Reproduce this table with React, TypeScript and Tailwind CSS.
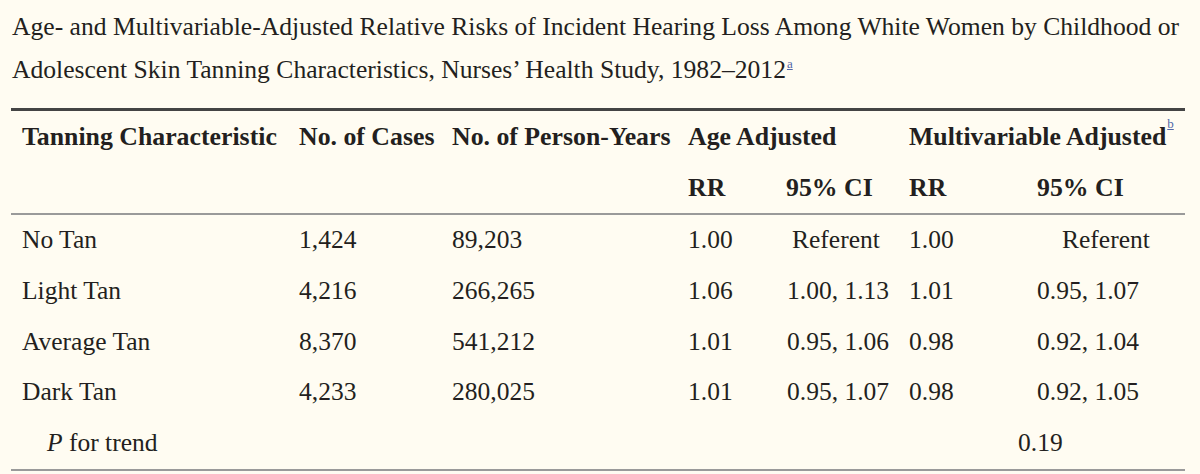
import React from 'react';

type Row = {
    name: string;
    cases: string;
    years: string;
    rr: string;
    ci: string;
    mvRr: string;
    mvCi: string;
    ref?: boolean;
};

const rows: Row[] = [
    { name: 'No Tan', cases: '1,424', years: '89,203', rr: '1.00', ci: 'Referent', mvRr: '1.00', mvCi: 'Referent', ref: true },
    { name: 'Light Tan', cases: '4,216', years: '266,265', rr: '1.06', ci: '1.00, 1.13', mvRr: '1.01', mvCi: '0.95, 1.07' },
    { name: 'Average Tan', cases: '8,370', years: '541,212', rr: '1.01', ci: '0.95, 1.06', mvRr: '0.98', mvCi: '0.92, 1.04' },
    { name: 'Dark Tan', cases: '4,233', years: '280,025', rr: '1.01', ci: '0.95, 1.07', mvRr: '0.98', mvCi: '0.92, 1.05' },
];

const grid = 'grid grid-cols-[277px_153px_236px_99px_122px_112px_1fr]';

export default function App() {
    return (
        <div
            className="w-[1200px] h-[474px] bg-[#fffcf2] text-[#231f20] overflow-hidden"
            style={{ fontFamily: '"Liberation Serif", "DejaVu Serif", serif' }}
        >
            {/* Caption */}
            <div className="pl-[12px] pt-[5px] text-[25.6px] leading-[43px] whitespace-nowrap">
                Age- and Multivariable-Adjusted Relative Risks of Incident Hearing Loss Among White Women by Childhood or
                <br />
                Adolescent Skin Tanning Characteristics, Nurses’ Health Study, 1982–2012
                <sup className="text-[13px] underline text-[#4f66a8] -top-[10px] ml-[1px]">a</sup>
            </div>

            {/* Table head */}
            <div className="ml-[11px] w-[1174px] mt-[17px] border-t-[3px] border-[#444] border-b-2 border-b-[#9a9a9a]">
                <div className="text-[25.8px] leading-[51px] font-bold">
                    <div className={grid}>
                        <div className="pl-[11px] whitespace-nowrap">Tanning Characteristic</div>
                        <div className="pl-[11px] whitespace-nowrap">No. of Cases</div>
                        <div className="pl-[11px] whitespace-nowrap">No. of Person-Years</div>
                        <div className="col-span-2 pl-[11px] whitespace-nowrap">Age Adjusted</div>
                        <div className="col-span-2 pl-[11px] whitespace-nowrap">
                            Multivariable Adjusted
                            <sup className="text-[13px] font-normal underline text-[#4f66a8] -top-[17px] ml-[1px]">b</sup>
                        </div>
                    </div>
                    <div className={grid}>
                        <div />
                        <div />
                        <div />
                        <div className="pl-[11px]">RR</div>
                        <div className="pl-[10px] whitespace-nowrap">95% CI</div>
                        <div className="pl-[11px]">RR</div>
                        <div className="pl-[27px] whitespace-nowrap">95% CI</div>
                    </div>
                </div>
            </div>

            {/* Table body */}
            <div className="ml-[11px] w-[1174px] border-b-2 border-[#9a9a9a] text-[25.5px] leading-[50.8px]">
                {rows.map((r) => (
                    <div key={r.name} className={grid}>
                        <div className="pl-[11px]">{r.name}</div>
                        <div className="pl-[11px]">{r.cases}</div>
                        <div className="pl-[11px]">{r.years}</div>
                        <div className="pl-[11px]">{r.rr}</div>
                        <div className={r.ref ? 'pl-[16px]' : 'pl-[11px] whitespace-nowrap'}>{r.ci}</div>
                        <div className="pl-[11px]">{r.mvRr}</div>
                        <div className={r.ref ? 'pl-[52px]' : 'pl-[27px] whitespace-nowrap'}>{r.mvCi}</div>
                    </div>
                ))}
                <div className={grid}>
                    <div className="pl-[36px]">
                        <i>P</i> for trend
                    </div>
                    <div />
                    <div />
                    <div />
                    <div />
                    <div />
                    <div className="pl-[8px]">0.19</div>
                </div>
            </div>
        </div>
    );
}
